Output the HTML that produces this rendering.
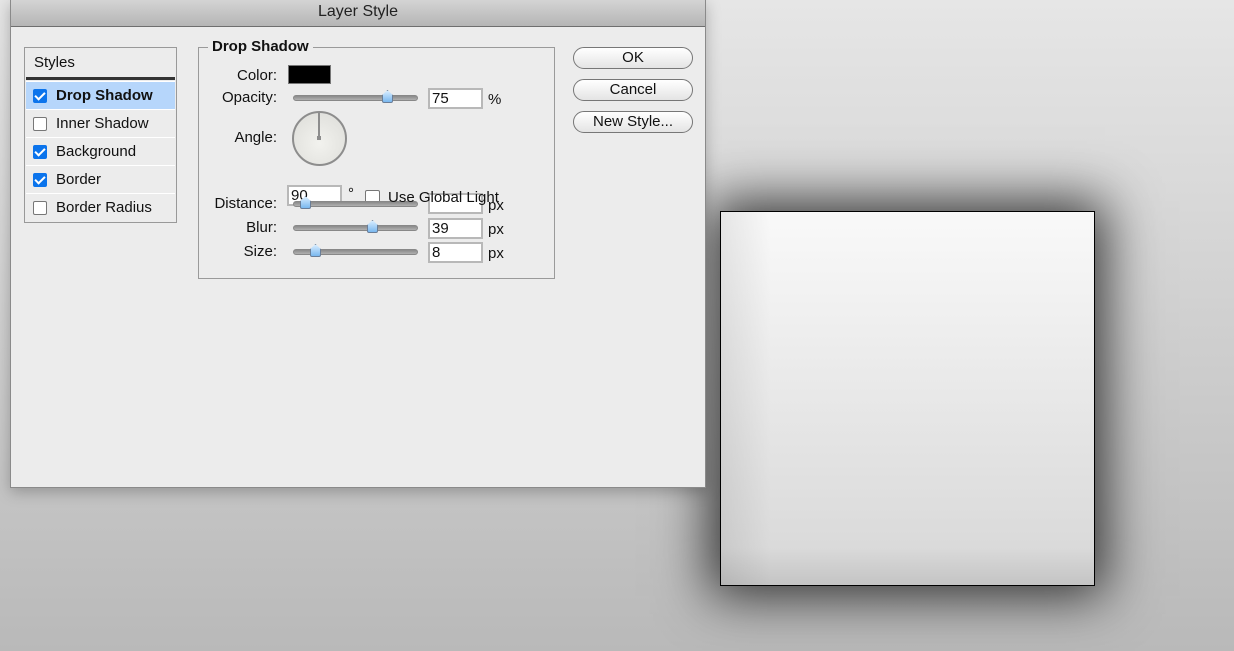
<!DOCTYPE html>
<html><head><meta charset="utf-8"><style>
*{box-sizing:border-box;margin:0;padding:0}
body{width:1234px;height:651px;overflow:hidden;position:relative;font-family:"Liberation Sans",sans-serif;font-size:15px;color:#111;background:linear-gradient(#e6e6e6,#b9b9b9)}
.a{position:absolute}
.dlg{left:10px;top:0;width:696px;height:488px;background:#ececec;border:1px solid #8a8a8a;border-top:none;box-shadow:0 4px 14px rgba(0,0,0,.25)}
.title{left:0;top:0;width:694px;height:27px;background:linear-gradient(#d4d4d4,#b5b5b5);border-bottom:1px solid #6e6e6e;text-align:center;line-height:24px;font-size:16px;color:#222}
.list{left:13px;top:47px;width:153px;height:176px;border:1px solid #999;background:#ececec}
.row{position:absolute;left:1px;width:149px;height:28px;border-top:1px solid #fff;line-height:27px;padding-left:30px}
.cb{position:absolute;left:7px;top:7px;width:14px;height:14px;border:1px solid #777;border-radius:2px;background:#fff}
.cb.on{background:#0b74ec;border-color:#0b74ec}
.cb.on:after{content:"";position:absolute;left:3px;top:0px;width:4px;height:8px;border:solid #fff;border-width:0 2px 2px 0;transform:rotate(45deg)}
.fs{left:187px;top:47px;width:357px;height:232px;border:1px solid #9a9a9a}
.lbl{text-align:right;width:80px}
.track{height:6px;width:125px;border-radius:3px;background:linear-gradient(#8a8a8a,#b0b0b0);border:1px solid #888}
.thumb{width:11px;height:13px;background:linear-gradient(#d6ecff,#7ab8ef);border:1px solid #6a7e98;clip-path:polygon(50% 0,100% 40%,100% 100%,0 100%,0 40%);border-radius:2px}
.inp{width:55px;height:21px;background:#fff;border:2px solid #b8b8b8;padding-left:2px;line-height:17px;font-size:15px}
.btn{left:573px;width:120px;height:22px;border:1px solid #777;border-radius:11px;background:linear-gradient(#fff,#e4e4e4);text-align:center;line-height:20px;font-size:15px}
.box{left:720px;top:211px;width:375px;height:375px;border:1px solid #000;background:linear-gradient(#f9f9f9,#dadada 90%,#c4c4c4);box-shadow:0 0 50px 10px rgba(0,0,0,.75)}
.box:before{content:"";position:absolute;left:0;top:0;bottom:0;width:50px;background:linear-gradient(90deg,rgba(0,0,0,.08),rgba(0,0,0,0))}
</style></head><body>
<div class="a box"></div>
<div class="a dlg">
<div class="a title">Layer Style</div>
<div class="a list">
 <div class="a" style="left:9px;top:6px">Styles</div>
 <div class="a" style="left:1px;top:29px;width:149px;height:3px;border-top:2px solid #333;border-bottom:1px solid #333"></div>
 <div class="row" style="top:33px;background:#b6d6fb;font-weight:bold"><span class="cb on"></span>Drop Shadow</div>
 <div class="row" style="top:61px"><span class="cb"></span>Inner Shadow</div>
 <div class="row" style="top:89px"><span class="cb on"></span>Background</div>
 <div class="row" style="top:117px"><span class="cb on"></span>Border</div>
 <div class="row" style="top:145px"><span class="cb"></span>Border Radius</div>
</div>
<div class="a fs"></div>
<div class="a" style="left:197px;top:38px;background:#ececec;padding:0 4px;font-weight:bold">Drop Shadow</div>
<div class="a lbl" style="left:186px;top:67px">Color:</div>
<div class="a" style="left:277px;top:65px;width:43px;height:19px;background:#000;border:1px solid #777"></div>
<div class="a lbl" style="left:186px;top:89px">Opacity:</div>
<div class="a track" style="left:282px;top:95px"></div>
<div class="a thumb" style="left:371px;top:90px"></div>
<div class="a inp" style="left:417px;top:88px">75</div>
<div class="a" style="left:477px;top:91px">%</div>
<div class="a lbl" style="left:186px;top:129px">Angle:</div>
<div class="a" style="left:281px;top:111px;width:55px;height:55px;border-radius:50%;border:2px solid #8d8d8d;background:radial-gradient(circle at 50% 60%,#f2f2ee,#dcdcd8)"></div>
<div class="a" style="left:307px;top:113px;width:2px;height:24px;background:#8d8d8d"></div>
<div class="a" style="left:306px;top:136px;width:4px;height:4px;background:#8d8d8d"></div>
<div class="a inp" style="left:276px;top:185px;width:55px">90</div>
<div class="a" style="left:337px;top:185px">°</div>
<div class="a" style="left:354px;top:190px;width:15px;height:15px;border:1px solid #777;border-radius:2px;background:#fff"></div>
<div class="a inp" style="left:417px;top:193px"></div>
<div class="a lbl" style="left:186px;top:195px">Distance:</div>
<div class="a track" style="left:282px;top:201px"></div>
<div class="a thumb" style="left:289px;top:196px"></div>
<div class="a" style="left:377px;top:189px">Use Global Light</div>
<div class="a" style="left:477px;top:197px">px</div>
<div class="a lbl" style="left:186px;top:219px">Blur:</div>
<div class="a track" style="left:282px;top:225px"></div>
<div class="a thumb" style="left:356px;top:220px"></div>
<div class="a inp" style="left:417px;top:218px">39</div>
<div class="a" style="left:477px;top:221px">px</div>
<div class="a lbl" style="left:186px;top:243px">Size:</div>
<div class="a track" style="left:282px;top:249px"></div>
<div class="a thumb" style="left:299px;top:244px"></div>
<div class="a inp" style="left:417px;top:242px">8</div>
<div class="a" style="left:477px;top:245px">px</div>
</div>
<div class="a btn" style="top:47px">OK</div>
<div class="a btn" style="top:79px">Cancel</div>
<div class="a btn" style="top:111px">New Style...</div>
</body></html>
